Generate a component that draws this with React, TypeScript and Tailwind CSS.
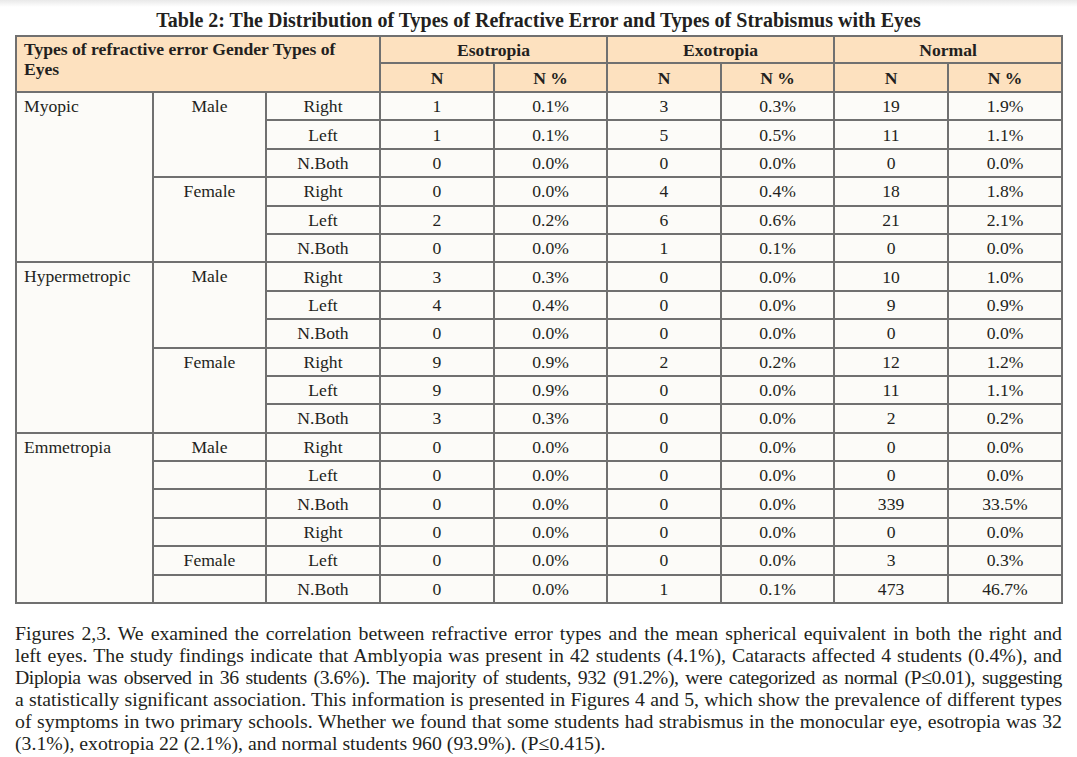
const rows: [string, string, string, string, string, string, string][] = [
  ["Right", "1", "0.1%", "3", "0.3%", "19", "1.9%"],
  ["Left", "1", "0.1%", "5", "0.5%", "11", "1.1%"],
  ["N.Both", "0", "0.0%", "0", "0.0%", "0", "0.0%"],
  ["Right", "0", "0.0%", "4", "0.4%", "18", "1.8%"],
  ["Left", "2", "0.2%", "6", "0.6%", "21", "2.1%"],
  ["N.Both", "0", "0.0%", "1", "0.1%", "0", "0.0%"],
  ["Right", "3", "0.3%", "0", "0.0%", "10", "1.0%"],
  ["Left", "4", "0.4%", "0", "0.0%", "9", "0.9%"],
  ["N.Both", "0", "0.0%", "0", "0.0%", "0", "0.0%"],
  ["Right", "9", "0.9%", "2", "0.2%", "12", "1.2%"],
  ["Left", "9", "0.9%", "0", "0.0%", "11", "1.1%"],
  ["N.Both", "3", "0.3%", "0", "0.0%", "2", "0.2%"],
  ["Right", "0", "0.0%", "0", "0.0%", "0", "0.0%"],
  ["Left", "0", "0.0%", "0", "0.0%", "0", "0.0%"],
  ["N.Both", "0", "0.0%", "0", "0.0%", "339", "33.5%"],
  ["Right", "0", "0.0%", "0", "0.0%", "0", "0.0%"],
  ["Left", "0", "0.0%", "0", "0.0%", "3", "0.3%"],
  ["N.Both", "0", "0.0%", "1", "0.1%", "473", "46.7%"],
]

const types: Record<number, string> = { 0: "Myopic", 6: "Hypermetropic", 12: "Emmetropia" }

// gender cell: [label, rowSpan] keyed by row index
const genders: Record<number, [string, number]> = {
  0: ["Male", 3],
  3: ["Female", 3],
  6: ["Male", 3],
  9: ["Female", 3],
  12: ["Male", 1],
  13: ["", 1],
  14: ["", 1],
  15: ["", 1],
  16: ["Female", 1],
  17: ["", 1],
}

const lines = [
  "Figures 2,3. We examined the correlation between refractive error types and the mean spherical equivalent in both the right and",
  "left eyes. The study findings indicate that Amblyopia was present in 42 students (4.1%), Cataracts affected 4 students (0.4%), and",
  "Diplopia was observed in 36 students (3.6%). The majority of students, 932 (91.2%), were categorized as normal (P≤0.01), suggesting",
  "a statistically significant association. This information is presented in Figures 4 and 5, which show the prevalence of different types",
  "of symptoms in two primary schools. Whether we found that some students had strabismus in the monocular eye, esotropia was 32",
]

const cell = "border-2 border-[#707070] text-center"

export default function App() {
  return (
    <div className="min-h-screen bg-white text-[#231f20] font-['Liberation_Serif','Times_New_Roman',serif]">
      <div className="h-[7px] bg-gradient-to-b from-[#e9e9e9] to-white" />
      <h2 className="text-center text-[20px] font-bold leading-[24px] mt-[1px] mb-[3px]">
        Table 2: The Distribution of Types of Refractive Error and Types of Strabismus with Eyes
      </h2>
      <div className="px-[15px]">
        <table className="w-[1046px] border-collapse text-[17.6px] leading-[20px] table-fixed">
          <colgroup>
            <col className="w-[137px]" />
            <col className="w-[113px]" />
            <col className="w-[114px]" />
            <col className="w-[114px]" />
            <col className="w-[113px]" />
            <col className="w-[114px]" />
            <col className="w-[113px]" />
            <col className="w-[114px]" />
            <col className="w-[114px]" />
          </colgroup>
          <thead className="bg-[#fde1bf] font-bold">
            <tr className="h-[27px]">
              <th colSpan={3} rowSpan={2} className="border-2 border-[#707070] text-left align-top px-[7px] pt-[2px] font-bold">
                Types of refractive error Gender Types of Eyes
              </th>
              <th colSpan={2} className={cell}>Esotropia</th>
              <th colSpan={2} className={cell}>Exotropia</th>
              <th colSpan={2} className={cell}>Normal</th>
            </tr>
            <tr className="h-[29px]">
              {["N", "N %", "N", "N %", "N", "N %"].map((h, i) => (
                <th key={i} className={cell}>{h}</th>
              ))}
            </tr>
          </thead>
          <tbody className="bg-[#fcfbf8]">
            {rows.map((r, i) => (
              <tr key={i} className="h-[28.4px]">
                {types[i] !== undefined && (
                  <td rowSpan={6} className="border-2 border-[#707070] align-top text-left px-[7px] pt-[3px]">
                    {types[i]}
                  </td>
                )}
                {genders[i] !== undefined && (
                  <td rowSpan={genders[i][1]} className="border-2 border-[#707070] align-top text-center pt-[3px]">
                    {genders[i][0]}
                  </td>
                )}
                {r.map((v, j) => (
                  <td key={j} className={cell}>{v}</td>
                ))}
              </tr>
            ))}
          </tbody>
        </table>
        <div className="mt-[18px] text-[19.8px] leading-[22px]">
          {lines.map((l, i) => (
            <p key={i} className={`whitespace-nowrap text-justify [text-align-last:justify] ${i === 2 ? "tracking-[-0.45px] [word-spacing:-1.5px]" : ""}`}>
              {l}
            </p>
          ))}
          <p className="whitespace-nowrap">(3.1%), exotropia 22 (2.1%), and normal students 960 (93.9%). (P≤0.415).</p>
        </div>
      </div>
    </div>
  )
}
